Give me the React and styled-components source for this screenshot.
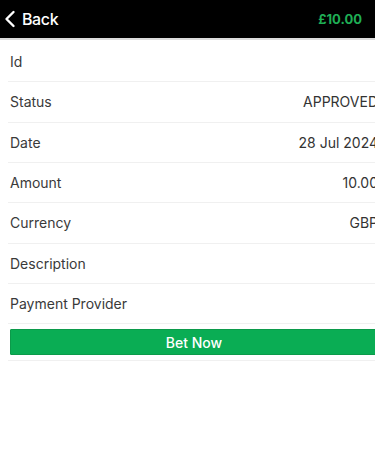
import styled, { createGlobalStyle } from "styled-components";

const GlobalStyle = createGlobalStyle`
  html, body {
    margin: 0;
    padding: 0;
    background: #fff;
    overflow: hidden;
  }
  body {
    font-family: Inter, "Noto Sans", sans-serif;
  }
`;

const Page = styled.div`
  width: 388px;
  min-height: 450px;
  background: #fff;
`;

const Header = styled.div`
  height: 40px;
  background: #000;
  border-bottom: 2px solid #dcdcdc;
  display: flex;
  align-items: center;
  justify-content: space-between;
  padding: 0 13px 0 4px;
  width: 375px;
  box-sizing: border-box;
`;

const BackButton = styled.div`
  display: flex;
  align-items: center;
  gap: 6px;
  color: #fff;
  font-size: 16px;
  font-weight: 500;
  letter-spacing: -0.4px;
  cursor: pointer;
`;

const Balance = styled.div`
  color: #1fae55;
  font-size: 13px;
  font-weight: 700;
`;

const List = styled.div`
  padding: 2px 10px 0 8px;
`;

const Row = styled.div`
  height: 39.33px;
  display: flex;
  align-items: center;
  justify-content: space-between;
  padding-left: 2px;
  border-bottom: 1px solid #f0f0f0;
  font-size: 14px;
  color: #3a3a3a;
`;

const Label = styled.span``;

const Value = styled.span`
  color: #333;
`;

const ButtonRow = styled.div`
  padding: 5px 0 5px 2px;
  border-bottom: 1px solid #f0f0f0;
`;

const BetButton = styled.button`
  display: block;
  width: 100%;
  height: 26px;
  border: 1px solid #0c9a4a;
  border-radius: 1px;
  background: #0aad54;
  color: #fff;
  font-family: inherit;
  font-size: 14px;
  font-weight: 500;
  cursor: pointer;
`;

const rows = [
  ["Id", ""],
  ["Status", "APPROVED"],
  ["Date", "28 Jul 2024"],
  ["Amount", "10.00"],
  ["Currency", "GBP"],
  ["Description", ""],
  ["Payment Provider", ""],
];

function App() {
  return (
    <Page>
      <GlobalStyle />
      <Header>
        <BackButton>
          <svg width="12" height="18" viewBox="0 0 12 18">
            <path
              d="M9.5 2 L2.5 9 L9.5 16"
              fill="none"
              stroke="#fff"
              strokeWidth="2.4"
              strokeLinecap="round"
              strokeLinejoin="round"
            />
          </svg>
          Back
        </BackButton>
        <Balance>£10.00</Balance>
      </Header>
      <List>
        {rows.map(([label, value]) => (
          <Row key={label}>
            <Label>{label}</Label>
            <Value>{value}</Value>
          </Row>
        ))}
        <ButtonRow>
          <BetButton>Bet Now</BetButton>
        </ButtonRow>
      </List>
    </Page>
  );
}

export default App;
